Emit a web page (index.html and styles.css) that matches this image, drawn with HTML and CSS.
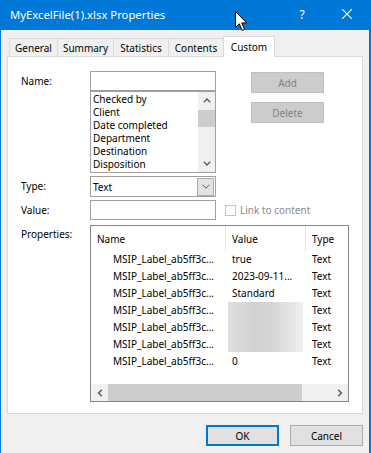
FILE: index.html
```html
<!DOCTYPE html>
<html>
<head>
<meta charset="utf-8">
<link rel="stylesheet" href="styles.css">
</head>
<body>
<div class="window">
  <div class="titlebar">
    <span class="title">MyExcelFile(1).xlsx Properties</span>
    <span class="tbtn help">?</span>
    <span class="tbtn close"><svg width="10" height="10" viewBox="0 0 10 10"><path d="M0 0L10 10M10 0L0 10" stroke="#fff" stroke-width="1.1"/></svg></span>
  </div>
  <div class="tabs">
    <div class="tab t-general">General</div>
    <div class="tab t-summary">Summary</div>
    <div class="tab t-stats">Statistics</div>
    <div class="tab t-contents">Contents</div>
    <div class="tab t-custom active">Custom</div>
  </div>
  <div class="panel">
    <div class="top">
      <div class="label">Name:</div>
      <div class="col">
        <div class="input name-input"></div>
        <div class="listbox">
          <div class="items">
            <div>Checked by</div>
            <div>Client</div>
            <div>Date completed</div>
            <div>Department</div>
            <div>Destination</div>
            <div>Disposition</div>
          </div>
          <div class="vscroll">
            <div class="arrow"><svg width="8" height="5" viewBox="0 0 8 5"><path d="M0.8 4.3L4 1.1L7.2 4.3" fill="none" stroke="#606060" stroke-width="1.4"/></svg></div>
            <div class="vthumb"></div>
            <div class="grow"></div>
            <div class="arrow"><svg width="8" height="5" viewBox="0 0 8 5"><path d="M0.8 0.7L4 3.9L7.2 0.7" fill="none" stroke="#606060" stroke-width="1.4"/></svg></div>
          </div>
        </div>
      </div>
      <div class="side">
        <div class="btn-dis">Add</div>
        <div class="btn-dis second">Delete</div>
      </div>
    </div>
    <div class="row type-row">
      <div class="label">Type:</div>
      <div class="combo">
        <span>Text</span>
        <span class="drop"><svg width="8" height="5" viewBox="0 0 8 5"><path d="M0.5 0.7L4 4.2L7.5 0.7" fill="none" stroke="#5a5a5a" stroke-width="1"/></svg></span>
      </div>
    </div>
    <div class="row value-row">
      <div class="label">Value:</div>
      <div class="input value-input"></div>
      <span class="check"></span>
      <span class="check-label">Link to content</span>
    </div>
    <div class="row props-row">
      <div class="label props-label">Properties:</div>
      <div class="plist">
        <div class="phead">
          <div>Name</div>
          <div>Value</div>
          <div class="last">Type</div>
        </div>
        <div class="prow"><span class="c1">MSIP_Label_ab5ff3c...</span><span class="c2">true</span><span class="c3">Text</span></div>
        <div class="prow"><span class="c1">MSIP_Label_ab5ff3c...</span><span class="c2">2023-09-11...</span><span class="c3">Text</span></div>
        <div class="prow"><span class="c1">MSIP_Label_ab5ff3c...</span><span class="c2">Standard</span><span class="c3">Text</span></div>
        <div class="prow"><span class="c1">MSIP_Label_ab5ff3c...</span><span class="c2"></span><span class="c3">Text</span></div>
        <div class="prow"><span class="c1">MSIP_Label_ab5ff3c...</span><span class="c2"></span><span class="c3">Text</span></div>
        <div class="prow"><span class="c1">MSIP_Label_ab5ff3c...</span><span class="c2"></span><span class="c3">Text</span></div>
        <div class="prow"><span class="c1">MSIP_Label_ab5ff3c...</span><span class="c2">0</span><span class="c3">Text</span></div>
        <div class="grow"></div>
        <div class="hscroll">
          <div class="harrow"><svg width="6" height="8" viewBox="0 0 6 8"><path d="M4.8 0.8L1.6 4L4.8 7.2" fill="none" stroke="#606060" stroke-width="1.6"/></svg></div>
          <div class="hthumb"></div>
          <div class="grow"></div>
          <div class="harrow"><svg width="6" height="8" viewBox="0 0 6 8"><path d="M1.2 0.8L4.4 4L1.2 7.2" fill="none" stroke="#606060" stroke-width="1.6"/></svg></div>
        </div>
        <div class="redact"></div>
      </div>
    </div>
  </div>
  <div class="footer">
    <div class="btn default">OK</div>
    <div class="btn">Cancel</div>
  </div>
  <svg class="cursor" width="13" height="21" viewBox="0 0 13 21"><path d="M0.5 0.5L0.5 16.5L4.3 12.8L7.2 19.5L9.6 18.5L6.8 11.9L11.8 11.9Z" fill="#fff" stroke="#000" stroke-width="1" stroke-linejoin="miter"/></svg>
</div>
</body>
</html>
```
FILE: styles.css
```css
* { box-sizing: border-box; }
html, body { margin: 0; padding: 0; }
body {
  width: 371px;
  height: 453px;
  overflow: hidden;
  font-family: "Noto Sans", "Open Sans", sans-serif;
  font-size: 10px;
  color: #000;
  background: #f0f0f0;
}
.window {
  position: relative;
  height: 453px;
  border-left: 1px solid #0078d7;
  border-right: 2px solid #0078d7;
  background: #f0f0f0;
}
.titlebar {
  height: 30px;
  background: #0078d7;
  color: #fff;
  display: flex;
  align-items: center;
}
.title {
  flex: 1;
  padding-left: 9px;
  padding-bottom: 2px;
  font-size: 11.3px;
}
.tbtn {
  height: 30px;
  display: flex;
  align-items: center;
  justify-content: center;
  padding-bottom: 2px;
}
.help { width: 46px; font-size: 12px; }
.close { width: 44px; }

.tabs {
  display: flex;
  align-items: flex-end;
  height: 20px;
  margin-top: 6px;
  padding-left: 8px;
}
.tab {
  height: 18px;
  border: 1px solid #d9d9d9;
  border-bottom: none;
  margin-left: -1px;
  display: flex;
  align-items: center;
  justify-content: center;
  background: #f0f0f0;
  padding-top: 1px;
}
.t-general { width: 49px; margin-left: 0; }
.t-summary { width: 57px; }
.t-stats { width: 56px; }
.t-contents { width: 56px; }
.t-custom { width: 52px; }
.tab.active {
  height: 21px;
  background: #fff;
  margin-bottom: -1px;
  position: relative;
  z-index: 1;
  padding-top: 0;
  padding-bottom: 1px;
}

.panel {
  margin: 0 6px;
  height: 358px;
  border: 1px solid #d9d9d9;
  background: #fff;
  padding: 14px 0 0 13px;
}
.top { display: flex; }
.label { width: 69px; line-height: 20px; flex-shrink: 0; }
.col { width: 126px; }
.input { border: 1px solid #a0a0a0; background: #fff; }
.name-input { height: 20px; }
.listbox {
  height: 82px;
  border: 1px solid #a0a0a0;
  border-top: 1px solid #a0a0a0;
  display: flex;
}
.items {
  flex: 1;
  padding: 1px 0 0 2px;
  line-height: 13px;
  white-space: nowrap;
  overflow: hidden;
}
.vscroll {
  width: 17px;
  background: #f0f0f0;
  display: flex;
  flex-direction: column;
}
.arrow {
  height: 17px;
  display: flex;
  align-items: center;
  justify-content: center;
}
.vthumb { height: 17px; background: #cdcdcd; margin-top: 1px; }
.grow { flex: 1; }
.side { margin-left: 35px; padding-top: 1px; }
.btn-dis {
  width: 73px;
  height: 21px;
  background: #cccccc;
  border: 1px solid #bfbfbf;
  color: #838383;
  display: flex;
  align-items: center;
  justify-content: center;
}
.btn-dis.second { margin-top: 9px; }

.row { display: flex; }
.type-row { margin-top: 3px; }
.combo {
  width: 126px;
  height: 21px;
  border: 1px solid #a0a0a0;
  display: flex;
  align-items: center;
  padding-left: 2px;
}
.drop {
  margin-left: auto;
  margin-right: 1px;
  width: 17px;
  height: 18px;
  background: #e3e3e3;
  border: 1px solid #acacac;
  display: flex;
  align-items: center;
  justify-content: center;
}
.value-row { margin-top: 3px; align-items: center; }
.value-input { width: 126px; height: 20px; }
.check {
  width: 11px;
  height: 11px;
  margin-left: 9px;
  border: 1px solid #c4c4c4;
  background: #fff;
}
.check-label { margin-left: 4px; color: #8a8a8a; }

.props-row { margin-top: 5px; }
.props-label { line-height: 14px; padding-top: 2px; }
.plist {
  position: relative;
  width: 259px;
  height: 177px;
  border: 1px solid #828790;
  display: flex;
  flex-direction: column;
}
.phead {
  display: grid;
  grid-template-columns: 135px 80px 1fr;
  height: 25px;
}
.phead > div {
  border-right: 1px solid #e5e5e5;
  padding-left: 6px;
  display: flex;
  align-items: center;
}
.phead > div.last { border-right: none; }
.prow {
  display: grid;
  grid-template-columns: 135px 80px 1fr;
  height: 17px;
  line-height: 17px;
  white-space: nowrap;
  overflow: hidden;
}
.c1 { padding-left: 22px; }
.c2, .c3 { padding-left: 6px; }
.hscroll {
  height: 17px;
  background: #f0f0f0;
  display: flex;
}
.harrow {
  width: 17px;
  display: flex;
  align-items: center;
  justify-content: center;
}
.hthumb { width: 194px; background: #cdcdcd; }
.redact {
  position: absolute;
  left: 137px;
  top: 76px;
  width: 75px;
  height: 50px;
  background: linear-gradient(90deg, #dedede 0%, #d2d2d2 35%, #d6d6d6 60%, #e6e6e6 85%, #efefef 100%);
}

.footer {
  display: flex;
  justify-content: flex-end;
  gap: 11px;
  padding: 11px 6px 0 0;
}
.btn {
  width: 73px;
  height: 21px;
  background: #e1e1e1;
  border: 1px solid #adadad;
  display: flex;
  align-items: center;
  justify-content: center;
}
.btn.default { border: 2px solid #0078d7; }

.cursor {
  position: absolute;
  left: 234px;
  top: 11px;
}
```
